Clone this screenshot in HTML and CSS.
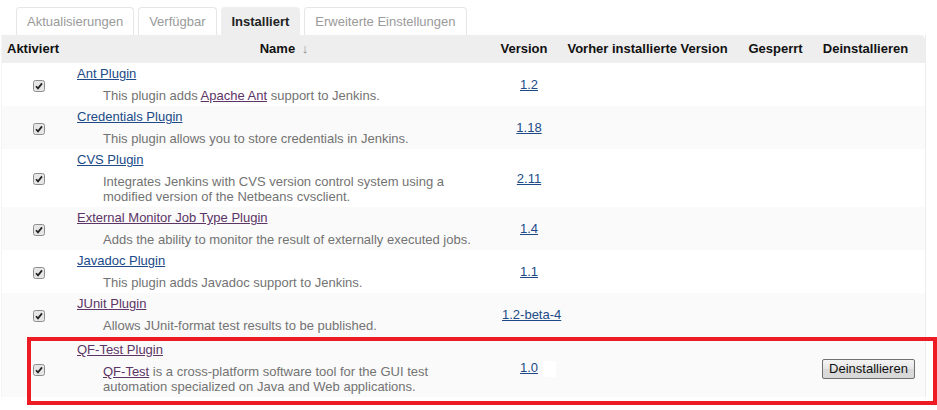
FILE: index.html
```html
<!DOCTYPE html>
<html lang="de">
<head>
<meta charset="utf-8">
<title>Plugins</title>
<link rel="stylesheet" href="styles.css">
</head>
<body>
<div class="page">
  <div class="tabs">
    <span class="tab">Aktualisierungen</span>
    <span class="tab">Verfügbar</span>
    <span class="tab active">Installiert</span>
    <span class="tab">Erweiterte Einstellungen</span>
  </div>
  <table class="plugins">
    <colgroup>
      <col class="c1"><col class="c2"><col class="c3"><col class="c4"><col class="c5"><col class="c6">
    </colgroup>
    <thead>
      <tr>
        <th class="left">Aktiviert</th>
        <th>Name <span class="arrow">↓</span></th>
        <th>Version</th>
        <th>Vorher installierte Version</th>
        <th>Gesperrt</th>
        <th class="last">Deinstallieren</th>
      </tr>
    </thead>
    <tbody>
      <tr>
        <td class="cbcell"><span class="cb"><svg width="12" height="12" viewBox="0 0 12 12"><rect x="0.5" y="0.5" width="11" height="11" rx="2" fill="#e6e6e6" stroke="#8e8e8e"/><path d="M3 6.2 L5 8.4 L9 3.4" fill="none" stroke="#222" stroke-width="1.7"/></svg></span></td>
        <td class="name"><a class="link" href="#">Ant Plugin</a><div class="desc">This plugin adds <a class="visited" href="#">Apache Ant</a> support to Jenkins.</div></td>
        <td class="ver"><a class="link" href="#">1.2</a></td>
        <td></td><td></td><td></td>
      </tr>
      <tr class="alt">
        <td class="cbcell"><span class="cb"><svg width="12" height="12" viewBox="0 0 12 12"><rect x="0.5" y="0.5" width="11" height="11" rx="2" fill="#e6e6e6" stroke="#8e8e8e"/><path d="M3 6.2 L5 8.4 L9 3.4" fill="none" stroke="#222" stroke-width="1.7"/></svg></span></td>
        <td class="name"><a class="link" href="#">Credentials Plugin</a><div class="desc">This plugin allows you to store credentials in Jenkins.</div></td>
        <td class="ver"><a class="link" href="#">1.18</a></td>
        <td></td><td></td><td></td>
      </tr>
      <tr>
        <td class="cbcell"><span class="cb"><svg width="12" height="12" viewBox="0 0 12 12"><rect x="0.5" y="0.5" width="11" height="11" rx="2" fill="#e6e6e6" stroke="#8e8e8e"/><path d="M3 6.2 L5 8.4 L9 3.4" fill="none" stroke="#222" stroke-width="1.7"/></svg></span></td>
        <td class="name"><a class="link" href="#">CVS Plugin</a><div class="desc">Integrates Jenkins with CVS version control system using a<br>modified version of the Netbeans cvsclient.</div></td>
        <td class="ver"><a class="link" href="#">2.11</a></td>
        <td></td><td></td><td></td>
      </tr>
      <tr class="alt">
        <td class="cbcell"><span class="cb"><svg width="12" height="12" viewBox="0 0 12 12"><rect x="0.5" y="0.5" width="11" height="11" rx="2" fill="#e6e6e6" stroke="#8e8e8e"/><path d="M3 6.2 L5 8.4 L9 3.4" fill="none" stroke="#222" stroke-width="1.7"/></svg></span></td>
        <td class="name"><a class="visited" href="#">External Monitor Job Type Plugin</a><div class="desc">Adds the ability to monitor the result of externally executed jobs.</div></td>
        <td class="ver"><a class="link" href="#">1.4</a></td>
        <td></td><td></td><td></td>
      </tr>
      <tr>
        <td class="cbcell"><span class="cb"><svg width="12" height="12" viewBox="0 0 12 12"><rect x="0.5" y="0.5" width="11" height="11" rx="2" fill="#e6e6e6" stroke="#8e8e8e"/><path d="M3 6.2 L5 8.4 L9 3.4" fill="none" stroke="#222" stroke-width="1.7"/></svg></span></td>
        <td class="name"><a class="link" href="#">Javadoc Plugin</a><div class="desc">This plugin adds Javadoc support to Jenkins.</div></td>
        <td class="ver"><a class="link" href="#">1.1</a></td>
        <td></td><td></td><td></td>
      </tr>
      <tr class="alt">
        <td class="cbcell"><span class="cb"><svg width="12" height="12" viewBox="0 0 12 12"><rect x="0.5" y="0.5" width="11" height="11" rx="2" fill="#e6e6e6" stroke="#8e8e8e"/><path d="M3 6.2 L5 8.4 L9 3.4" fill="none" stroke="#222" stroke-width="1.7"/></svg></span></td>
        <td class="name"><a class="visited" href="#">JUnit Plugin</a><div class="desc">Allows JUnit-format test results to be published.</div></td>
        <td class="ver"><a class="link" href="#">1.2-beta-4</a></td>
        <td></td><td></td><td></td>
      </tr>
      <tr class="alt qf">
        <td class="cbcell"><span class="cb"><svg width="12" height="12" viewBox="0 0 12 12"><rect x="0.5" y="0.5" width="11" height="11" rx="2" fill="#e6e6e6" stroke="#8e8e8e"/><path d="M3 6.2 L5 8.4 L9 3.4" fill="none" stroke="#222" stroke-width="1.7"/></svg></span></td>
        <td class="name"><a class="visited" href="#">QF-Test Plugin</a><div class="desc"><a class="visited" href="#">QF-Test</a> is a cross-platform software tool for the GUI test<br>automation specialized on Java and Web applications.</div></td>
        <td class="ver"><a class="link" href="#">1.0</a><span class="blank"></span></td>
        <td></td><td></td>
        <td class="btncell"><button class="btn" type="button">Deinstallieren</button></td>
      </tr>
    </tbody>
  </table>
  <div class="highlight"></div>
</div>
</body>
</html>
```
FILE: styles.css
```css
html, body {
  margin: 0;
  padding: 0;
  background: #fff;
}
body {
  font-family: "Liberation Sans", Arial, sans-serif;
  font-size: 13px;
  color: #222;
  min-height: 410px;
}
.page {
  position: relative;
  padding: 7px 0 0 1px;
  min-height: 403px;
}
.tabs {
  display: flex;
  gap: 4px;
  padding-left: 15px;
}
.tab {
  display: block;
  border: 1px solid #e6e6e6;
  border-bottom: none;
  border-radius: 4px 4px 0 0;
  padding: 6px 10px 5px;
  line-height: 16px;
  color: #9a9a9a;
  background: #fff;
}
.tab.active {
  background: #eeeeee;
  border-color: #eeeeee;
  color: #222;
  font-weight: bold;
}
.plugins {
  width: 924px;
  border-collapse: separate;
  border-spacing: 0;
  table-layout: fixed;
  border-right: 1px solid #ececec;
  border-left: 1px solid #f4f4f4;
}
.c1 { width: 74px; }
.c2 { width: 416px; }
.c3 { width: 64px; }
.c4 { width: 183px; }
.c5 { width: 73px; }
.c6 { width: 113px; }
.plugins th {
  background: #eeeeee;
  font-weight: bold;
  color: #111;
  line-height: 16px;
  padding: 6px 0 6px;
  text-align: center;
  white-space: nowrap;
}
.plugins th.left {
  text-align: left;
  padding-left: 5px;
}
.plugins th.last {
  border-top-right-radius: 5px;
  padding-right: 6px;
}
.arrow {
  font-weight: normal;
  color: #888;
  padding-left: 3px;
}
.plugins td {
  padding: 0;
  vertical-align: middle;
}
.plugins tr.alt td {
  background: #fafafa;
}
.cbcell {
  text-align: center;
}
.cb {
  display: inline-block;
  width: 12px;
  height: 12px;
  vertical-align: middle;
}
.cb svg {
  display: block;
}
.name {
  padding: 3px 0 3px 1px !important;
  line-height: 16px;
}
.qf .name {
  padding-top: 6px !important;
}
.qf .cbcell {
  padding-top: 4px !important;
}
.desc {
  margin-top: 6px;
  padding-left: 26px;
  line-height: 15px;
  color: #737373;
}
.link {
  color: #204a87;
  text-decoration: underline;
}
.visited {
  color: #5c3566;
  text-decoration: underline;
}
.ver {
  text-align: center;
  white-space: nowrap;
  padding-left: 10px !important;
}
.qf .ver {
  padding-top: 4px !important;
}
.blank {
  display: inline-block;
  width: 13px;
  height: 16px;
  background: #fff;
  vertical-align: middle;
  margin-left: 5px;
  margin-right: -18px;
}
.btncell {
  text-align: center;
  padding-top: 4px !important;
}
.btn {
  font-family: "Liberation Sans", Arial, sans-serif;
  font-size: 13px;
  color: #111;
  height: 20px;
  padding: 0 6px;
  border: 1px solid #707070;
  border-radius: 2px;
  background: linear-gradient(#f4f4f4, #e6e6e6 50%, #dadada 51%, #d8d8d8);
  line-height: 16px;
}
.highlight {
  position: absolute;
  left: 27px;
  top: 337px;
  width: 902px;
  height: 60px;
  border: 4px solid #ed1c24;
  pointer-events: none;
}
```
